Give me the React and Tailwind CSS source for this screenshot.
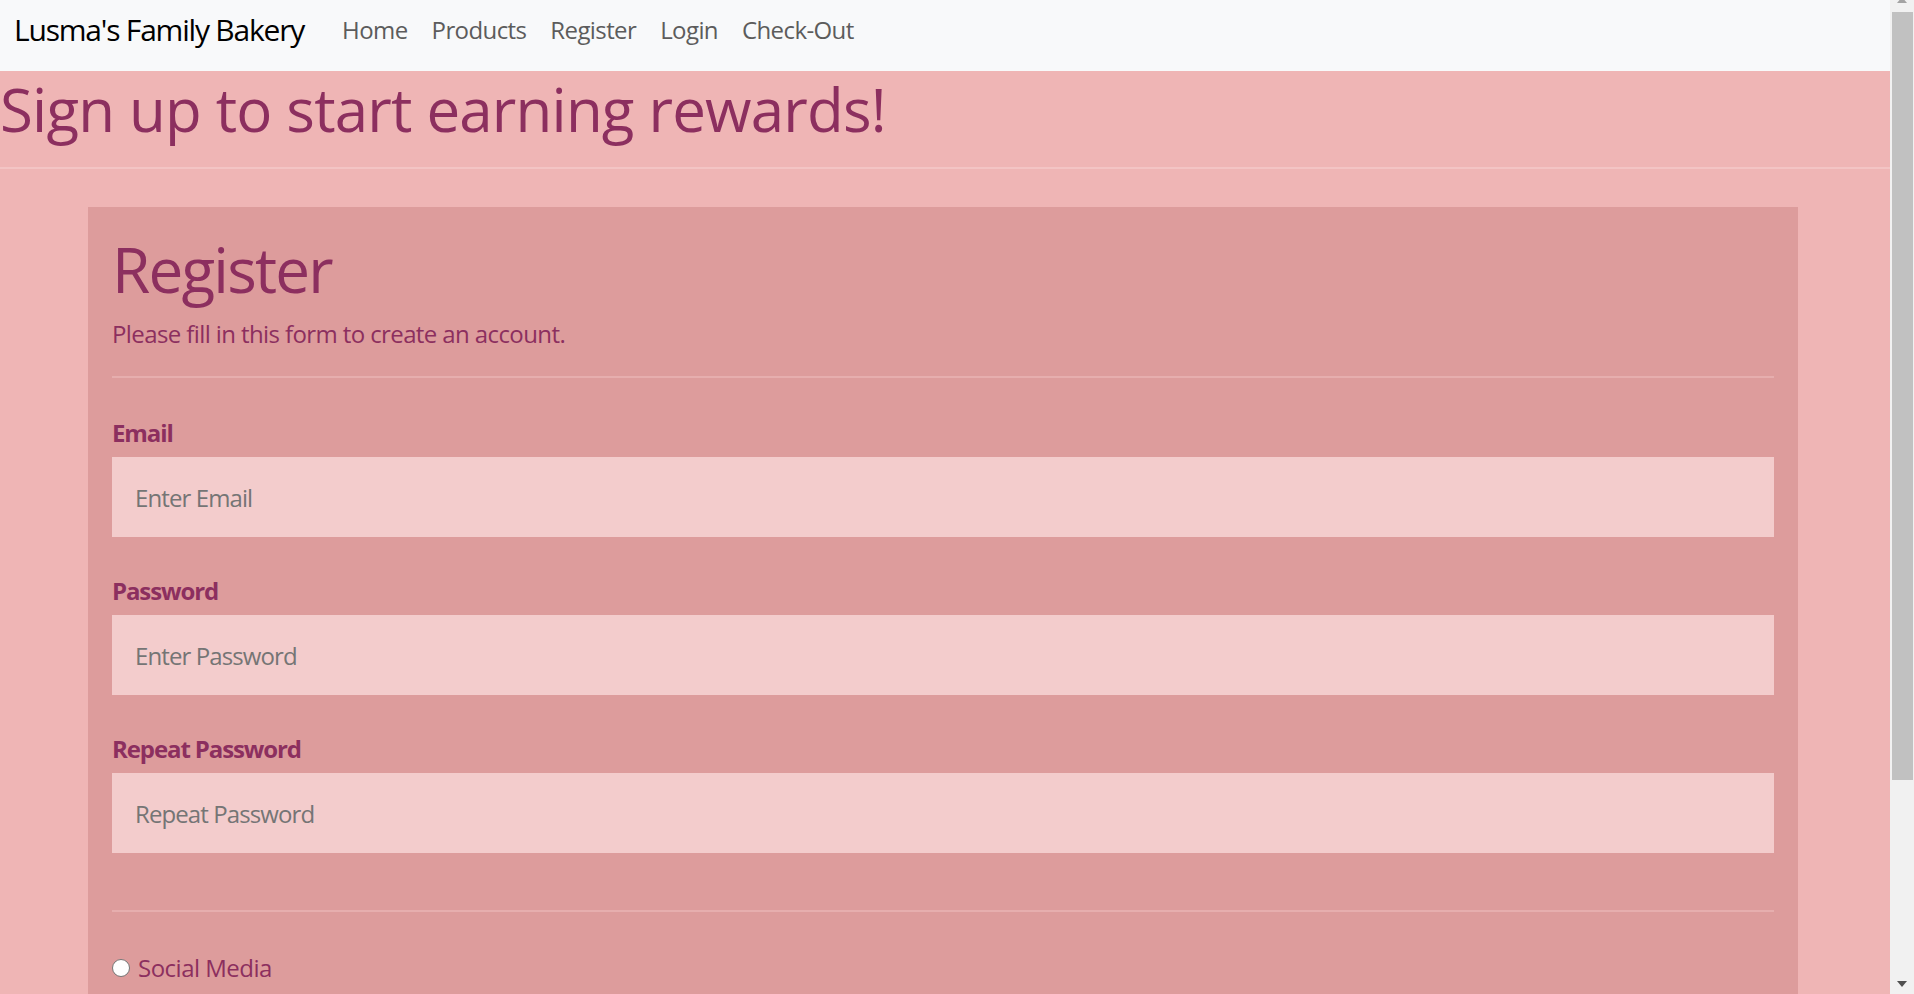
const FONT = "font-['Open_Sans','Noto_Sans',sans-serif]";

const NAV_LINKS = ["Home", "Products", "Register", "Login", "Check-Out"];

const FIELDS = [
  { label: "Email", placeholder: "Enter Email", type: "text", gap: "mt-[37px]" },
  { label: "Password", placeholder: "Enter Password", type: "password", gap: "mt-[36px]" },
  { label: "Repeat Password", placeholder: "Repeat Password", type: "password", gap: "mt-[36px]" },
];

function Navbar() {
  return (
    <nav className="flex h-[71px] shrink-0 items-start bg-[#f8f9fa] pl-[14px]">
      <a className="mt-[10px] mr-[26px] text-[30px] leading-[40px] tracking-[-1.2px] text-black">
        Lusma's Family Bakery
      </a>
      <ul className="flex">
        {NAV_LINKS.map((link) => (
          <li key={link}>
            <a className="mt-[12px] block px-[12px] text-[24px] leading-[36px] tracking-[-0.6px] text-[#5c5c5c]">
              {link}
            </a>
          </li>
        ))}
      </ul>
    </nav>
  );
}

function Scrollbar() {
  return (
    <div className="relative flex w-[24px] shrink-0 flex-col bg-[#f1f1f1]">
      <div className="absolute left-[7px] top-[-3px] h-0 w-0 border-x-[5px] border-b-[6px] border-x-transparent border-b-[#a3a3a3]" />
      <div className="ml-[2px] mt-[12px] h-[768px] w-[21px] bg-[#c1c1c1]" />
      <div className="absolute left-[7px] top-[981px] h-0 w-0 border-x-[5px] border-t-[6px] border-x-transparent border-t-[#505050]" />
    </div>
  );
}

export default function App() {
  return (
    <div className={`flex h-[994px] w-full overflow-hidden ${FONT}`}>
      <div className="flex min-w-0 flex-1 flex-col overflow-hidden bg-[#efb5b5]">
        <Navbar />

        <header className="border-b-[2px] border-[#f3c4c4] pt-[2px] pb-[22px]">
          <h1 className="text-[60px] leading-[72px] tracking-[-0.8px] text-[#8c2f5f]">
            Sign up to start earning rewards!
          </h1>
        </header>

        <main className="ml-[88px] mr-[92px] mt-[38px] shrink-0 bg-[#dd9c9c] px-[24px] pt-[24px] pb-[40px]">
          <h2 className="text-[62px] leading-[76px] tracking-[-1.8px] text-[#8c2f5f]">Register</h2>
          <p className="mt-[9px] text-[24px] leading-[36px] tracking-[-0.6px] text-[#8c2f5f]">
            Please fill in this form to create an account.
          </p>
          <hr className="mt-[24px] border-0 border-t-[2px] border-[#e6aeae]" />

          {FIELDS.map((f) => (
            <div key={f.label} className={`${f.gap} flex flex-col`}>
              <label className="text-[24px] font-bold leading-[36px] tracking-[-1.1px] text-[#8c2f5f]">
                {f.label}
              </label>
              <input
                type={f.type}
                placeholder={f.placeholder}
                className="mt-[6px] h-[80px] w-full bg-[#f3cccc] px-[23px] text-[24px] tracking-[-0.9px] text-[#333] outline-none placeholder:text-[#757575]"
              />
            </div>
          ))}

          <hr className="mt-[57px] border-0 border-t-[2px] border-[#e6aeae]" />

          <label className="mt-[38px] flex items-center">
            <input
              type="radio"
              name="source"
              className="h-[18px] w-[18px] appearance-none rounded-full border border-[#767676] bg-white"
            />
            <span className="ml-[8px] text-[24px] leading-[36px] tracking-[-0.5px] text-[#8c2f5f]">
              Social Media
            </span>
          </label>
        </main>
      </div>
      <Scrollbar />
    </div>
  );
}
